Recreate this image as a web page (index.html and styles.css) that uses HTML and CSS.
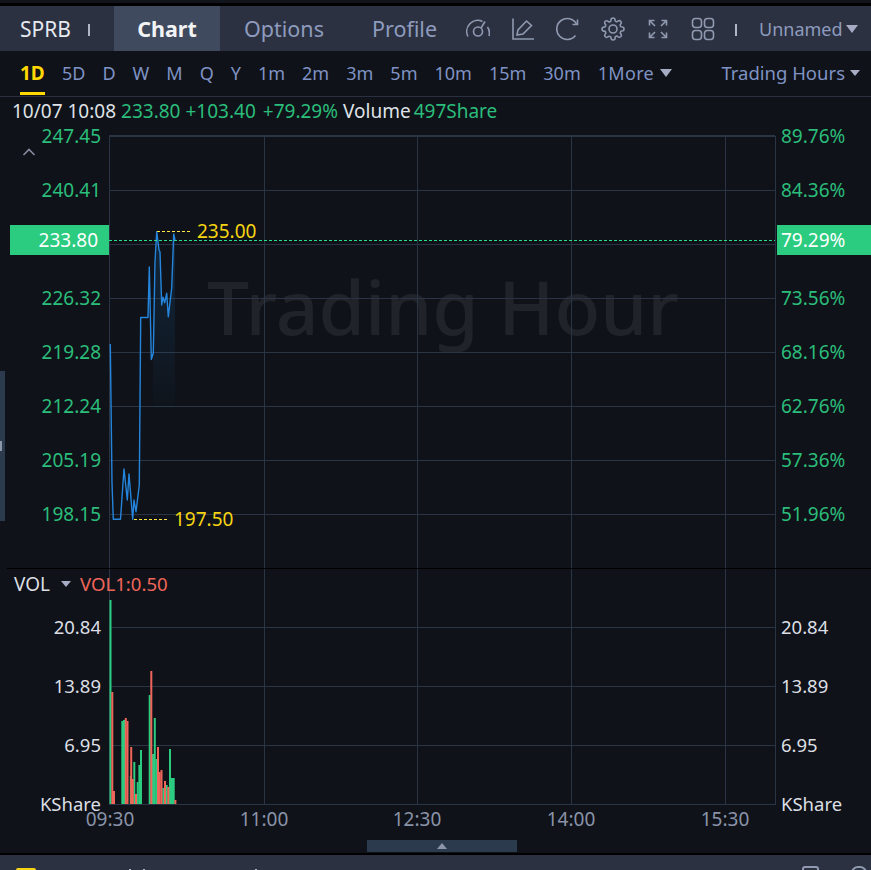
FILE: index.html
```html
<!DOCTYPE html>
<html lang="en">
<head>
<meta charset="utf-8">
<title>SPRB Chart</title>
<link rel="stylesheet" href="styles.css">
</head>
<body>
<div class="page">
  <div class="top-strip"></div>
  <header class="header">
    <span class="symbol">SPRB</span>
    <span class="sep sep-symbol"></span>
    <span class="tab tab-active">Chart</span>
    <span class="tab tab-options">Options</span>
    <span class="tab tab-profile">Profile</span>
    <div class="icons">
      <svg class="icon" viewBox="0 0 24 24"><path d="M2 19.500A11 11 0 0 1 16.500 4.500"/><path d="M21.500 10A11 11 0 0 1 23 19"/><circle cx="12" cy="14.500" r="4.500"/><path d="M15 11 19 4.500"/></svg>
      <svg class="icon" viewBox="0 0 24 24"><path d="M2 1.500V22H23"/><path d="M6 18 7 13 15.500 4 20.500 8.500 12 17Z"/></svg>
      <svg class="icon" viewBox="0 0 24 24"><path d="M20.500 7A10.500 10.500 0 1 0 19.500 18.500"/><path d="M21.500 2.500V7.500H16.500"/></svg>
      <svg class="icon" viewBox="0 0 24 24"><path d="M19.4 15a1.650 1.650 0 0 0 .33 1.820l.06.06a2 2 0 0 1 0 2.830 2 2 0 0 1-2.830 0l-.06-.06a1.650 1.650 0 0 0-1.820-.33 1.650 1.650 0 0 0-1 1.510V21a2 2 0 0 1-2 2 2 2 0 0 1-2-2v-.09A1.650 1.650 0 0 0 9 19.400a1.650 1.650 0 0 0-1.820.33l-.06.06a2 2 0 0 1-2.830 0 2 2 0 0 1 0-2.830l.06-.06a1.650 1.650 0 0 0 .33-1.820 1.650 1.650 0 0 0-1.510-1H3a2 2 0 0 1-2-2 2 2 0 0 1 2-2h.09A1.650 1.650 0 0 0 4.600 9a1.650 1.650 0 0 0-.33-1.820l-.06-.06a2 2 0 0 1 0-2.830 2 2 0 0 1 2.830 0l.06.06a1.650 1.650 0 0 0 1.820.33H9a1.650 1.650 0 0 0 1-1.510V3a2 2 0 0 1 2-2 2 2 0 0 1 2 2v.09a1.650 1.650 0 0 0 1 1.510 1.650 1.650 0 0 0 1.820-.33l.06-.06a2 2 0 0 1 2.830 0 2 2 0 0 1 0 2.830l-.06.06a1.650 1.650 0 0 0-.33 1.820V9a1.650 1.650 0 0 0 1.510 1H21a2 2 0 0 1 2 2 2 2 0 0 1-2 2h-.09a1.650 1.650 0 0 0-1.510 1z"/><circle cx="12" cy="12" r="4"/></svg>
      <svg class="icon" viewBox="0 0 24 24"><path d="M3.500 8.500V3.500H8.500M3.500 3.500 9 9"/><path d="M15.500 3.500H20.500V8.500M20.500 3.500 15 9"/><path d="M3.500 15.500V20.500H8.500M3.500 20.500 9 15"/><path d="M15.500 20.500H20.500V15.500M20.500 20.500 15 15"/></svg>
      <svg class="icon" viewBox="0 0 24 24"><rect x="1.500" y="1.500" width="9" height="9" rx="3"/><rect x="13.500" y="1.500" width="9" height="9" rx="3"/><rect x="1.500" y="13.500" width="9" height="9" rx="3"/><rect x="13.500" y="13.500" width="9" height="9" rx="3"/></svg>
    </div>
    <span class="sep sep-layout"></span>
    <span class="layout-name">Unnamed</span>
    <span class="caret caret-layout"></span>
  </header>
  <nav class="toolbar">
    <span class="period period-active">1D</span>
    <span class="period">5D</span>
    <span class="period">D</span>
    <span class="period">W</span>
    <span class="period">M</span>
    <span class="period">Q</span>
    <span class="period">Y</span>
    <span class="period">1m</span>
    <span class="period">2m</span>
    <span class="period">3m</span>
    <span class="period">5m</span>
    <span class="period">10m</span>
    <span class="period">15m</span>
    <span class="period">30m</span>
    <span class="period period-more">1More<span class="caret caret-more"></span></span>
    <span class="session">Trading Hours<span class="caret caret-session"></span></span>
  </nav>
  <div class="info">
    <span class="info-time">10/07 10:08</span>
    <span class="info-up">233.80</span>
    <span class="info-up">+103.40</span>
    <span class="info-up info-pct">+79.29%</span>
    <span class="info-time">Volume</span>
    <span class="info-up info-share">497Share</span>
  </div>
  <div class="chart">
    <svg class="chart-svg" width="871" height="728" viewBox="0 125 871 728">
      <defs>
        <linearGradient id="areaFade" gradientUnits="userSpaceOnUse" x1="0" y1="232" x2="0" y2="408">
          <stop offset="0" stop-color="#1e78c8" stop-opacity="0.2"/>
          <stop offset="1" stop-color="#1e78c8" stop-opacity="0.02"/>
        </linearGradient>
      </defs>

      <text class="watermark" x="207" y="335">Trading Hour</text>

      <g class="grid">
        <path class="grid-top" d="M109 136H775"/>
        <path d="M109 190.500H775M109 244.500H775M109 298.500H775M109 352.500H775M109 406.500H775M109 460.500H775M109 514.500H775"/>
        <path d="M109 627.500H775M109 686.500H775M109 745.500H775M109 804.500H775"/>
        <path d="M109.500 136V805M264.500 136V805M417.500 136V805M571.500 136V805M725.500 136V805M775.500 136V805"/>
      </g>
      <path class="panel-split" d="M7 568.500H871"/>

      <polygon class="area" points="153,408 153,353 157,232 159,250 160,252 162,305 163,297 165,303 167,293 168.500,317 171.700,288 173.700,234 175,240 175,408"/>
      <path class="price-line" d="M110.300 344 112 483 113.300 519.300H120.500L124 469 127.300 500 129 474 132.700 519.300 134 500 136 511.700 139.300 485 140.700 317.500H148L149.300 267 151.300 359.500 153.300 353 155 262 156.700 231.700 159 250 160 252 161.700 305 163 297.300 164.700 302.700 166.700 293.300 168.300 316.700 171.700 288 173.700 234 175 240"/>
      <path class="last-line" d="M109 240.500H775"/>

      <path class="extreme-dash" d="M157 231.500H191M134 519.500H168"/>
      <text class="extreme" x="197" y="238">235.00</text>
      <text class="extreme" x="174" y="526">197.50</text>

      <g class="axis-up left">
        <text x="101" y="143">247.45</text>
        <text x="101" y="197">240.41</text>
        <text x="101" y="305">226.32</text>
        <text x="101" y="359">219.28</text>
        <text x="101" y="413">212.24</text>
        <text x="101" y="467">205.19</text>
        <text x="101" y="521">198.15</text>
      </g>
      <g class="axis-up">
        <text x="781" y="143">89.76%</text>
        <text x="781" y="197">84.36%</text>
        <text x="781" y="305">73.56%</text>
        <text x="781" y="359">68.16%</text>
        <text x="781" y="413">62.76%</text>
        <text x="781" y="467">57.36%</text>
        <text x="781" y="521">51.96%</text>
      </g>

      <rect class="tag" x="10" y="225" width="99" height="30"/>
      <rect class="tag" x="777" y="225" width="94" height="30"/>
      <text class="tag-text left" x="98" y="247">233.80</text>
      <text class="tag-text" x="781" y="247">79.29%</text>

      <path class="chevron" d="M23.500 155 29 149.500 34.500 155"/>

      <text class="vol-name" x="14" y="591">VOL</text>
      <polygon class="vol-caret" points="61,581 71,581 66,587"/>
      <text class="vol-value" x="80" y="591">VOL1:0.50</text>

      <g class="green-bars">
        <rect x="109.500" y="600" width="2" height="204"/>
        <rect x="121.300" y="721" width="2" height="83"/>
        <rect x="123" y="720" width="2" height="84"/>
        <rect x="129.800" y="776" width="2" height="28"/>
        <rect x="133.300" y="762" width="2" height="42"/>
        <rect x="136.700" y="782" width="2" height="22"/>
        <rect x="138.400" y="765" width="2" height="39"/>
        <rect x="140" y="750" width="2" height="54"/>
        <rect x="148.700" y="695" width="2" height="109"/>
        <rect x="152" y="754" width="2" height="50"/>
        <rect x="153.800" y="718" width="2" height="86"/>
        <rect x="155.500" y="759" width="2" height="45"/>
        <rect x="162.300" y="788" width="2" height="16"/>
        <rect x="165.700" y="785" width="2" height="19"/>
        <rect x="169" y="749" width="2" height="55"/>
        <rect x="171" y="778" width="2" height="26"/>
        <rect x="172.700" y="778" width="2" height="26"/>
      </g>
      <g class="red-bars">
        <rect x="111.300" y="692" width="2" height="112"/>
        <rect x="113" y="791" width="2" height="13"/>
        <rect x="124.800" y="718" width="2" height="86"/>
        <rect x="126.500" y="721" width="2" height="83"/>
        <rect x="130.200" y="747" width="2" height="57"/>
        <rect x="131.800" y="779" width="2" height="25"/>
        <rect x="135" y="794" width="2" height="10"/>
        <rect x="150.300" y="671" width="2" height="133"/>
        <rect x="157" y="747" width="2" height="57"/>
        <rect x="158.700" y="772" width="2" height="32"/>
        <rect x="160.500" y="770" width="2" height="34"/>
        <rect x="164" y="781" width="2" height="23"/>
        <rect x="167.300" y="787" width="2" height="17"/>
        <rect x="174.400" y="800" width="2" height="4"/>
      </g>

      <g class="axis-plain left">
        <text x="101" y="634">20.84</text>
        <text x="101" y="693">13.89</text>
        <text x="101" y="752">6.95</text>
        <text x="101" y="811">KShare</text>
      </g>
      <g class="axis-plain">
        <text x="781" y="634">20.84</text>
        <text x="781" y="693">13.89</text>
        <text x="781" y="752">6.95</text>
        <text x="781" y="811">KShare</text>
      </g>
      <g class="axis-time">
        <text x="110" y="826">09:30</text>
        <text x="264" y="826">11:00</text>
        <text x="417" y="826">12:30</text>
        <text x="571" y="826">14:00</text>
        <text x="725" y="826">15:30</text>
      </g>
    </svg>
    <div class="side-handle"><span class="side-grip"></span></div>
    <div class="bottom-handle"><span class="bottom-arrow"></span></div>
  </div>
  <footer class="footer">
    <span class="foot-logo"></span>
    <span class="foot-tick foot-tick-a"></span>
    <span class="foot-tick foot-tick-b"></span>
    <span class="foot-tick foot-tick-c"></span>
    <span class="foot-box"></span>
    <span class="foot-heart"></span>
  </footer>
</div>
</body>
</html>
```

FILE: styles.css
```css
* { box-sizing: border-box; }

html, body {
  margin: 0;
  padding: 0;
  background: #000;
}

body {
  font-family: "Noto Sans", "Open Sans", sans-serif;
  font-size: 19px;
  overflow: hidden;
}

.page {
  width: 871px;
  height: 870px;
  overflow: hidden;
  display: flex;
  flex-direction: column;
}

.top-strip {
  height: 3px;
  margin-bottom: 3px;
  background: #11141a;
  flex: none;
}

/* Header */
.header {
  flex: none;
  height: 45px;
  background: #2b3141;
  display: flex;
  align-items: center;
  padding-left: 20px;
  color: #8e9bbd;
}

.symbol {
  color: #e6e9ef;
  font-size: 21px;
  width: 68px;
}

.sep {
  width: 2px;
  height: 12px;
  background: #aeb6c8;
  flex: none;
  margin-top: 3px;
}

.sep-symbol { margin-right: 24px; }

.tab {
  height: 45px;
  display: flex;
  align-items: center;
  justify-content: center;
  font-size: 21.5px;
}

.tab-active {
  width: 106px;
  background: #3f4a5e;
  color: #f2f3f5;
  font-weight: 700;
}

.tab-options { width: 128px; }
.tab-profile { width: 113px; }

.icons {
  display: flex;
  gap: 21px;
  margin-left: 5px;
}

.icon {
  width: 24px;
  height: 24px;
  fill: none;
  stroke: #8f99b0;
  stroke-width: 1.6;
}

.sep-layout {
  margin-left: 20px;
  margin-right: 22px;
}

.layout-name {
  font-size: 18px;
  color: #8e9bbd;
}

.caret {
  display: inline-block;
  width: 0;
  height: 0;
  border-style: solid;
  border-color: #a6acc4 transparent transparent;
}

.caret-layout {
  border-width: 8px 6.5px 0;
  margin-left: 3px;
}

/* Period toolbar */
.toolbar {
  flex: none;
  height: 46px;
  background: #0f1218;
  display: flex;
  align-items: center;
  gap: 17px;
  padding: 0 11px 2px 20px;
  position: relative;
  color: #7f93c4;
  border-bottom: 1px solid #2a3040;
}

.period {
  line-height: 24px;
  font-size: 18px;
  white-space: nowrap;
}

.period-active {
  color: #ffd800;
  font-weight: 700;
  font-size: 19px;
  min-width: 25px;
  position: relative;
}

.period-active::after {
  content: "";
  position: absolute;
  left: 0;
  right: 0;
  top: 31px;
  height: 3px;
  background: #ffd800;
}

.period-more { display: flex; align-items: center; letter-spacing: 0.3px; }

.caret-more {
  border-width: 8px 6px 0;
  margin-left: 6px;
}

.session {
  margin-left: auto;
  display: flex;
  align-items: center;
  white-space: nowrap;
  font-size: 18.5px;
}

.caret-session {
  border-width: 6px 5px 0;
  margin-left: 5px;
}

/* Quote row */
.info {
  flex: none;
  height: 28px;
  background: #0f1218;
  display: flex;
  align-items: center;
  gap: 5px;
  padding-left: 12px;
  white-space: nowrap;
}

.info-time { color: #dfe2e7; }
.info-up { color: #2bbd7b; }
.info-pct { margin-left: 2px; }
.info-share { margin-left: -2px; }

/* Chart canvas */
.chart {
  flex: none;
  height: 728px;
  position: relative;
  background: #0f1218;
}

.chart-svg {
  display: block;
  overflow: visible;
  font-family: "Noto Sans", "Open Sans", sans-serif;
  font-size: 19px;
}

.watermark {
  font-size: 75px;
  font-weight: 500;
  fill: #202329;
}

.grid path {
  fill: none;
  stroke: #2b3444;
  stroke-width: 1;
  shape-rendering: crispEdges;
}

.grid .grid-top { stroke-width: 2; }

.panel-split {
  stroke: #000;
  stroke-width: 1;
  shape-rendering: crispEdges;
}

.area { fill: url(#areaFade); }

.price-line {
  fill: none;
  stroke: #2585dc;
  stroke-width: 1.4;
  stroke-linejoin: round;
}

.last-line {
  stroke: #2bdc88;
  stroke-width: 1;
  stroke-dasharray: 3 2;
  shape-rendering: crispEdges;
}

.extreme-dash {
  stroke: #ffe640;
  stroke-width: 1;
  stroke-dasharray: 3 2;
  shape-rendering: crispEdges;
}

.extreme { fill: #f5d412; }

.axis-up text { fill: #2bbd7b; }
.axis-plain text { fill: #dcdfe4; font-size: 18.5px; }
.left text, text.left { text-anchor: end; }

.axis-time text {
  fill: #8a93a8;
  text-anchor: middle;
}

.tag { fill: #2bcb80; }
.tag-text { fill: #fff; }

.chevron {
  fill: none;
  stroke: #8a8aa0;
  stroke-width: 1.6;
}

.vol-name { fill: #dcdfe4; }
.vol-caret { fill: #a6acc4; }
.vol-value { fill: #f0655a; font-size: 18.6px; }

.green-bars rect { fill: #2bcb80; }
.red-bars rect { fill: #f0655a; }

.side-handle {
  position: absolute;
  left: 0;
  top: 246px;
  width: 5px;
  height: 150px;
  background: #2c3a4d;
  display: flex;
  align-items: center;
}

.side-grip {
  width: 2px;
  height: 10px;
  background: #8d96a8;
}

.bottom-handle {
  position: absolute;
  left: 367px;
  top: 715px;
  width: 150px;
  height: 12px;
  background: #2c3a4d;
  display: flex;
  align-items: center;
  justify-content: center;
}

.bottom-arrow {
  width: 0;
  height: 0;
  border-style: solid;
  border-width: 0 5px 6px;
  border-color: transparent transparent #8d96a8;
}

/* Cropped bottom bar */
.footer {
  flex: none;
  height: 15px;
  margin-top: 2px;
  background: #2b3141;
  position: relative;
  overflow: hidden;
}

.foot-logo {
  position: absolute;
  left: 16px;
  top: 13px;
  width: 20px;
  height: 8px;
  background: #f5d412;
  border-radius: 2px 2px 0 0;
}

.foot-tick {
  position: absolute;
  top: 14px;
  width: 2px;
  height: 6px;
  background: #aeb6c8;
}

.foot-tick-a { left: 129px; }
.foot-tick-b { left: 143px; }
.foot-tick-c { left: 255px; }

.foot-box {
  position: absolute;
  left: 802px;
  top: 11px;
  width: 17px;
  height: 14px;
  border: 2px solid #8f99b0;
  border-radius: 3px;
}

.foot-heart {
  position: absolute;
  left: 851px;
  top: 11px;
  width: 16px;
  height: 14px;
  border: 2px solid #8f99b0;
  border-radius: 7px 7px 0 0;
}
```
